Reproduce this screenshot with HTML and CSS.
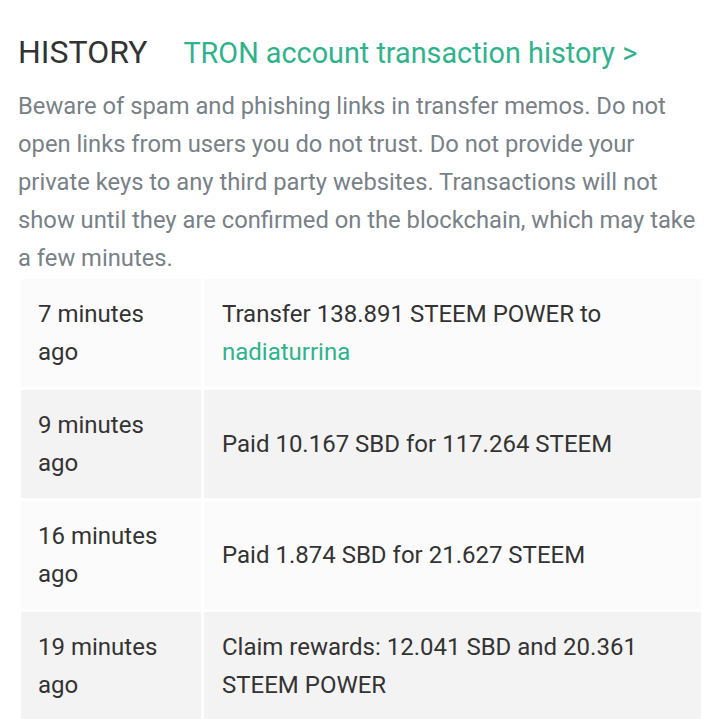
FILE: index.html
```html
<!DOCTYPE html>
<html>
<head>
<meta charset="utf-8">
<link rel="stylesheet" href="styles.css">
</head>
<body>
<div class="page">
  <div class="header">
    <h2 class="title">HISTORY</h2>
    <a class="tron-link" href="#">TRON account transaction history &gt;</a>
  </div>
  <p class="warning">Beware of spam and phishing links in transfer memos. Do not open links from users you do not trust. Do not provide your private keys to any third party websites. Transactions will not show until they are confirmed on the blockchain, which may take a few minutes.</p>
  <table class="history">
    <tbody>
      <tr class="odd">
        <td class="time">7 minutes ago</td>
        <td class="desc">Transfer 138.891 STEEM POWER to <a href="#" class="user">nadiaturrina</a></td>
      </tr>
      <tr class="even">
        <td class="time">9 minutes ago</td>
        <td class="desc">Paid 10.167 SBD for 117.264 STEEM</td>
      </tr>
      <tr class="odd">
        <td class="time">16 minutes ago</td>
        <td class="desc">Paid 1.874 SBD for 21.627 STEEM</td>
      </tr>
      <tr class="even">
        <td class="time">19 minutes ago</td>
        <td class="desc">Claim rewards: 12.041 SBD and 20.361 STEEM POWER</td>
      </tr>
    </tbody>
  </table>
</div>
</body>
</html>
```
FILE: styles.css
```css
html, body {
  margin: 0;
  padding: 0;
  background: #ffffff;
}
body {
  font-family: Roboto, "Liberation Sans", sans-serif;
  color: #333333;
}
.page {
  padding: 0 18px;
}
.header {
  display: flex;
  align-items: baseline;
  gap: 36px;
  padding-top: 32px;
}
.title {
  margin: 0;
  font-size: 32px;
  font-weight: 400;
  line-height: 40px;
  color: #333333;
}
.tron-link {
  font-size: 28.8px;
  line-height: 40px;
  color: #2fb38c;
  text-decoration: none;
}
.warning {
  margin: 14px -6px 0 0;
  font-size: 23.75px;
  line-height: 38px;
  color: #788187;
}
.history {
  border-collapse: separate;
  border-spacing: 3px;
  width: 686px;
  margin-top: -1px;
  font-size: 24px;
  line-height: 38px;
  color: #333333;
}
.history td {
  padding: 16px 17px;
  vertical-align: middle;
}
.history .time {
  width: 146px;
}
.history .desc {
  padding-left: 18px;
}
.odd td {
  background: #fbfbfb;
}
.even td {
  background: #f3f3f3;
}
.user {
  color: #2fb38c;
  text-decoration: none;
}
```
